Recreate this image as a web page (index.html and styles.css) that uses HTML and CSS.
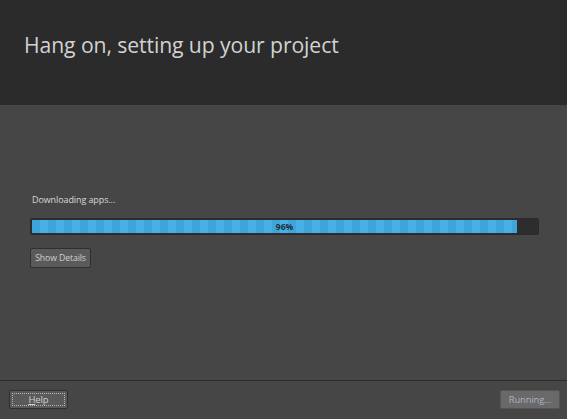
FILE: index.html
```html
<!DOCTYPE html>
<html>
<head>
<meta charset="utf-8">
<link rel="stylesheet" href="styles.css">
</head>
<body>
<div class="window">
  <header class="header">
    <h1 class="title">Hang on, setting up your project</h1>
  </header>
  <main class="content">
    <div class="status">Downloading apps...</div>
    <div class="progress">
      <div class="progress-fill" style="width:96%"></div>
      <span class="progress-label">96%</span>
    </div>
    <button class="btn details">Show Details</button>
  </main>
  <footer class="footer">
    <button class="btn help"><span class="focus"><u>H</u>elp</span></button>
    <button class="btn running" disabled>Running...</button>
  </footer>
</div>
</body>
</html>
```

FILE: styles.css
```css
* { box-sizing: border-box; }
html, body { margin: 0; padding: 0; }
body {
  width: 567px;
  height: 419px;
  overflow: hidden;
  background: #464646;
  font-family: "Open Sans", "Liberation Sans", sans-serif;
}
.window {
  display: flex;
  flex-direction: column;
  height: 419px;
}
.header {
  height: 105px;
  background: #2b2b2b;
  padding: 30px 0 0 24px;
  flex: none;
}
.title {
  margin: 0;
  font-weight: 400;
  font-size: 21.2px;
  line-height: 30px;
  color: #d2d2d2;
  letter-spacing: -0.1px;
}
.content {
  flex: 1;
  padding: 88px 28px 0 30px;
}
.status {
  font-size: 9px;
  color: #d8d8d8;
  line-height: 14px;
  margin-left: 2px;
  margin-bottom: 11px;
  letter-spacing: -0.1px;
}
.progress {
  position: relative;
  height: 17px;
  border: 1px solid #2a2a2a;
  border-radius: 2px;
  background: #2d2d2d;
  overflow: hidden;
  padding: 1px;
}
.progress-fill {
  height: 100%;
  background: repeating-linear-gradient(90deg, #3fa4da 0 8px, #47b0e6 8px 16px);
}
.progress-label {
  position: absolute;
  left: 0; right: 0; top: 0;
  text-align: center;
  font-size: 8.5px;
  font-weight: 700;
  line-height: 15px;
  color: #1c2c38;
}
.btn {
  font-family: "Open Sans", "Liberation Sans", sans-serif;
  font-size: 8.7px;
  border: 1px solid #2f2f2f;
  border-radius: 2px;
  background: #5a5a5a;
  color: #d0d0d0;
  padding: 0;
  height: 20px;
  letter-spacing: -0.1px;
}
.details {
  margin-top: 13px;
  width: 61px;
}
.footer {
  flex: none;
  height: 39px;
  border-top: 1px solid #2c2c2c;
  display: flex;
  justify-content: space-between;
  align-items: flex-start;
  padding: 9px 7px 0 9px;
}
.help {
  width: 59px;
  height: 19px;
  padding: 2px;
  font-size: 9.5px;
  color: #d0d0d0;
}
.focus {
  display: block;
  height: 100%;
  border: 1px dotted #b8b8b8;
  line-height: 12px;
}
.running {
  width: 60px;
  height: 19px;
  font-size: 9.3px;
  background: #696969;
  border-color: #555;
  color: #a8b4c0;
}
```
